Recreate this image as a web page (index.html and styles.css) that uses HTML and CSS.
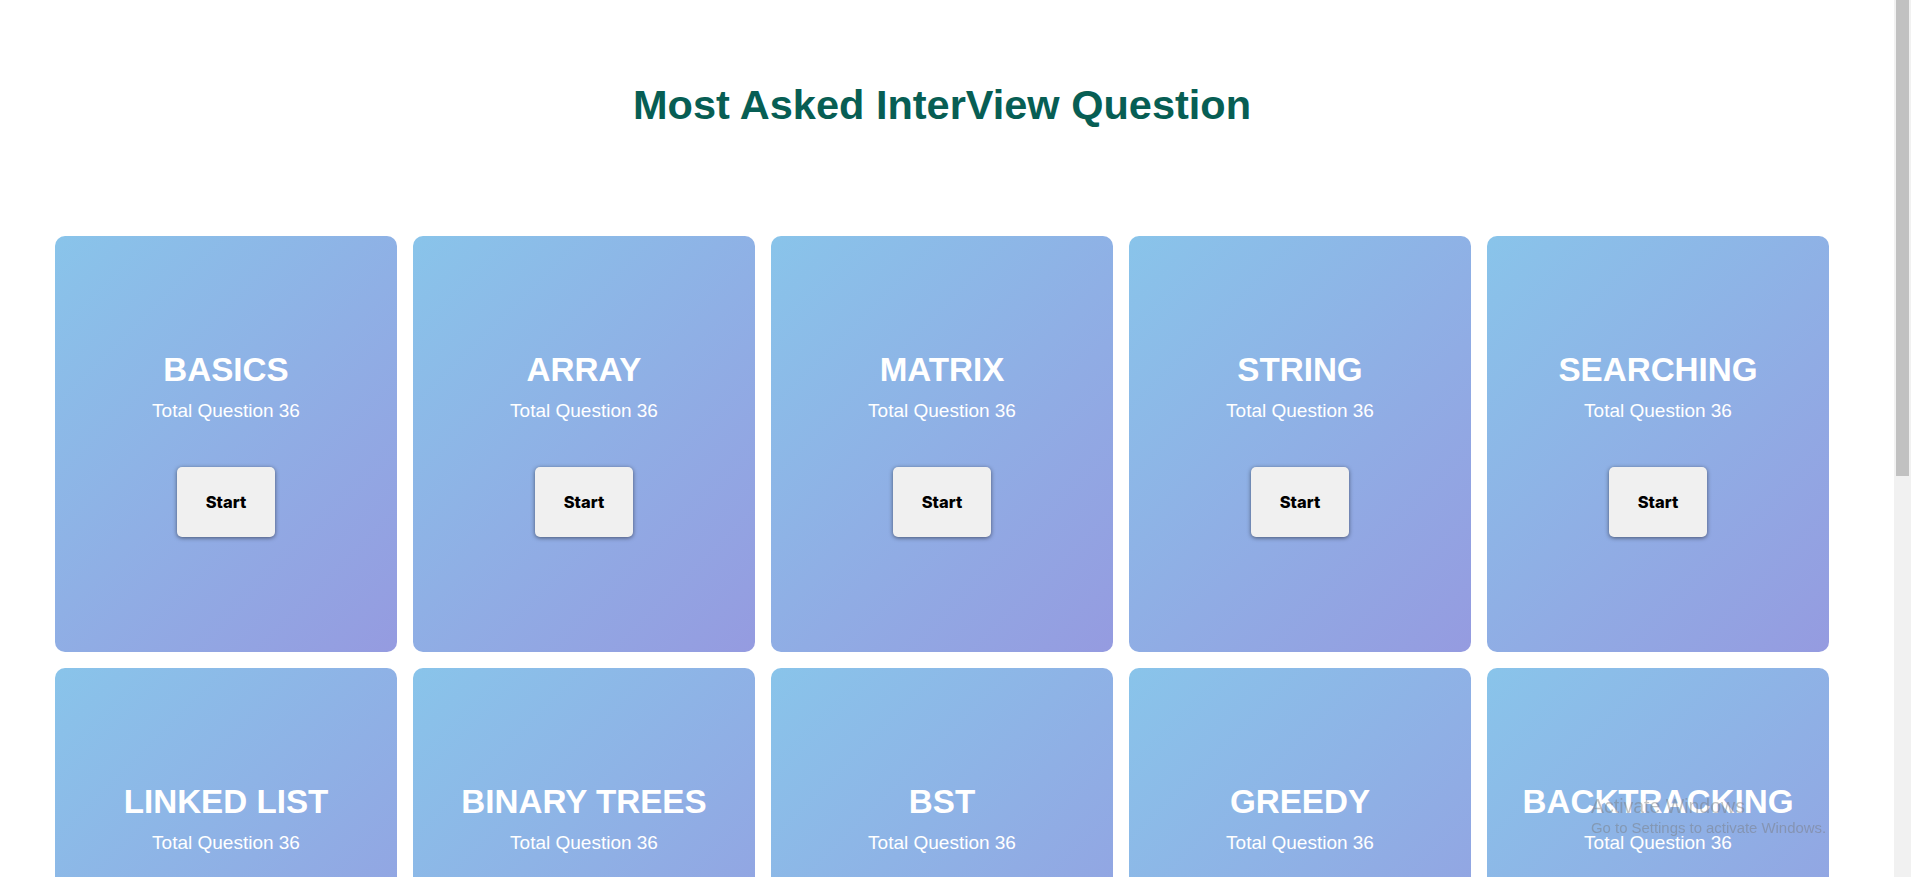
FILE: index.html
```html
<!DOCTYPE html>
<html lang="en">
<head>
<meta charset="utf-8">
<title>Most Asked InterView Question</title>
<link rel="stylesheet" href="styles.css">
</head>
<body>
<main class="container">
  <h1 class="page-title">Most Asked InterView Question</h1>
  <section class="grid">
    <div class="card"><h2 class="card-title">BASICS</h2><p class="card-count">Total Question 36</p><button class="start-btn">Start</button></div>
    <div class="card"><h2 class="card-title">ARRAY</h2><p class="card-count">Total Question 36</p><button class="start-btn">Start</button></div>
    <div class="card"><h2 class="card-title">MATRIX</h2><p class="card-count">Total Question 36</p><button class="start-btn">Start</button></div>
    <div class="card"><h2 class="card-title">STRING</h2><p class="card-count">Total Question 36</p><button class="start-btn">Start</button></div>
    <div class="card"><h2 class="card-title">SEARCHING</h2><p class="card-count">Total Question 36</p><button class="start-btn">Start</button></div>
    <div class="card"><h2 class="card-title">LINKED LIST</h2><p class="card-count">Total Question 36</p><button class="start-btn">Start</button></div>
    <div class="card"><h2 class="card-title">BINARY TREES</h2><p class="card-count">Total Question 36</p><button class="start-btn">Start</button></div>
    <div class="card"><h2 class="card-title">BST</h2><p class="card-count">Total Question 36</p><button class="start-btn">Start</button></div>
    <div class="card"><h2 class="card-title">GREEDY</h2><p class="card-count">Total Question 36</p><button class="start-btn">Start</button></div>
    <div class="card"><h2 class="card-title">BACKTRACKING</h2><p class="card-count">Total Question 36</p><button class="start-btn">Start</button></div>
    <div class="card"><h2 class="card-title">STACKS</h2><p class="card-count">Total Question 36</p><button class="start-btn">Start</button></div>
    <div class="card"><h2 class="card-title">HEAP</h2><p class="card-count">Total Question 36</p><button class="start-btn">Start</button></div>
    <div class="card"><h2 class="card-title">GRAPH</h2><p class="card-count">Total Question 36</p><button class="start-btn">Start</button></div>
    <div class="card"><h2 class="card-title">TRIE</h2><p class="card-count">Total Question 36</p><button class="start-btn">Start</button></div>
    <div class="card"><h2 class="card-title">DYNAMIC PROG.</h2><p class="card-count">Total Question 36</p><button class="start-btn">Start</button></div>
  </section>
</main>
<div class="scrollbar" aria-hidden="true">
  <div class="scrollbar-thumb"></div>
</div>
<div class="watermark">
  <div class="wm-title">Activate Windows</div>
  <div class="wm-sub">Go to Settings to activate Windows.</div>
</div>
</body>
</html>
```

FILE: styles.css
```css
body {
  margin: 0;
  background: #ffffff;
  font-family: "Liberation Sans", Arial, sans-serif;
}

.container {
  width: 1774px;
  margin: 0 0 0 55px;
  padding: 81px 0 70px;
}

.page-title {
  margin: 0 0 108px;
  text-align: center;
  font-size: 41.5px;
  font-weight: 700;
  line-height: 47px;
  color: #075e54;
}

.grid {
  display: grid;
  grid-template-columns: repeat(5, 342px);
  gap: 16px;
}

.card {
  height: 416px;
  border-radius: 10px;
  background: linear-gradient(135deg, #89c4ea 0%, #959be0 100%);
  display: flex;
  flex-direction: column;
  align-items: center;
  justify-content: center;
  color: #ffffff;
}

.card-title {
  margin: 0;
  font-size: 33.2px;
  font-weight: 700;
  line-height: 37px;
  white-space: nowrap;
}

.card-count {
  margin: 12px 0 0;
  font-size: 19px;
  line-height: 21px;
}

.start-btn {
  margin-top: 46px;
  width: 98px;
  height: 70px;
  border: none;
  border-radius: 5px;
  background: #f0f0f0;
  box-shadow: 0 1px 4px rgba(0, 0, 0, 0.5);
  font-family: Inter, "Noto Sans", sans-serif;
  font-weight: 800;
  font-size: 16.5px;
  color: #000000;
  cursor: pointer;
}

.scrollbar {
  position: fixed;
  top: 0;
  right: 0;
  width: 17px;
  height: 100vh;
  background: #f1f1f1;
}

.scrollbar-thumb {
  margin: 0 2px;
  height: 476px;
  background: #c1c1c1;
}

.watermark {
  position: fixed;
  left: 1591px;
  top: 795px;
  color: rgba(120, 120, 120, 0.45);
  font-family: "Liberation Sans", Arial, sans-serif;
  pointer-events: none;
}

.wm-title {
  font-size: 19.5px;
  line-height: 22px;
  margin-bottom: 3px;
}

.wm-sub {
  font-size: 14.9px;
  line-height: 17px;
}
```
